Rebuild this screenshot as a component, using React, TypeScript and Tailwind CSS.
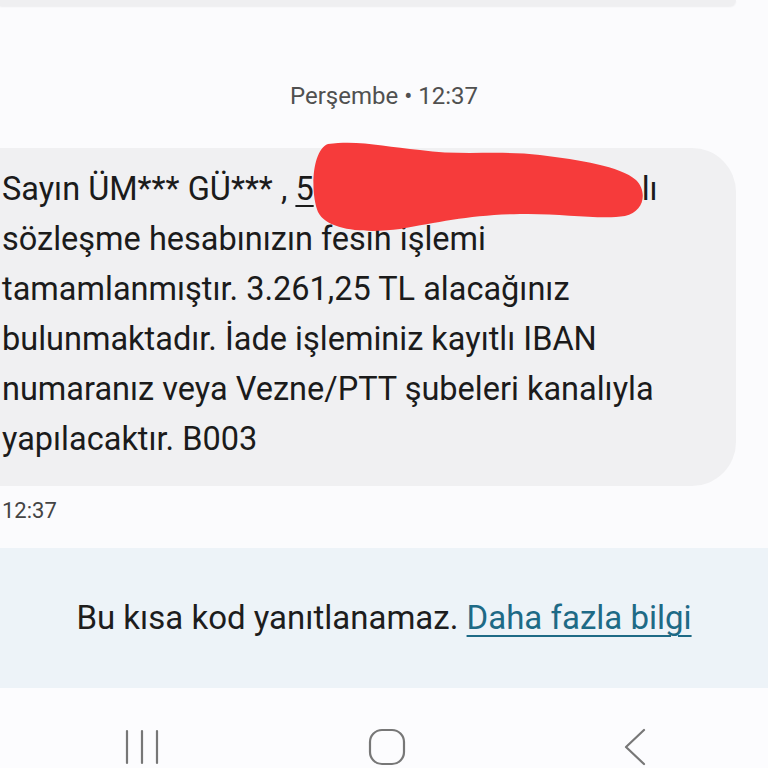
export default function App() {
  const font = { fontFamily: 'Roboto, "Noto Sans", Arial, sans-serif' };
  return (
    <div className="flex h-[768px] w-[768px] flex-col overflow-hidden bg-[#fbfbfd]" style={font}>
      {/* previous bubble remnant */}
      <div className="h-[6px] w-[736px] rounded-br-[16px] bg-[#efeff1] shadow-[0_1px_2px_rgba(0,0,0,0.06)]" />

      {/* date header */}
      <div className="mt-[76px] text-center text-[24px] leading-[28px] text-[#505050]">
        Perşembe • 12:37
      </div>

      {/* message bubble */}
      <div className="relative mt-[38px] w-[736px] rounded-r-[44px] bg-[#f0f0f2] pb-[22px] pl-[2px] pt-[16px] text-[32.5px] leading-[50px] text-[#1b1b1b]">
        <div className="whitespace-nowrap">
          Sayın ÜM*** GÜ*** , <span className="underline decoration-[2px] underline-offset-[5px]">5</span>
          <span className="inline-block w-[328px]" />lı
        </div>
        <div className="whitespace-nowrap">sözleşme hesabınızın fesih işlemi</div>
        <div className="whitespace-nowrap">tamamlanmıştır. 3.261,25 TL alacağınız</div>
        <div className="whitespace-nowrap">bulunmaktadır. İade işleminiz kayıtlı IBAN</div>
        <div className="whitespace-nowrap">numaranız veya Vezne/PTT şubeleri kanalıyla</div>
        <div className="whitespace-nowrap">yapılacaktır. B003</div>

        {/* redaction scribble */}
        <svg
          className="absolute left-[305px] top-[-10px]"
          width="345"
          height="100"
          viewBox="305 138 345 100"
        >
          <path
            d="M328 144 C360 140 385 147 420 150 C460 156 500 150 540 155 C580 160 620 166 636 180 C648 192 644 212 625 216 C600 220 560 213 520 214 C470 215 440 222 400 229 C370 233 328 232 318 212 C310 192 312 150 328 144 Z"
            fill="#f63b3b"
          />
        </svg>
      </div>

      <div className="mt-[12px] pl-[2px] text-[22px] leading-[26px] text-[#444]">12:37</div>

      {/* info band */}
      <div className="mt-[24px] flex h-[140px] items-center justify-center bg-[#edf3f8] text-[33px] text-[#1d1d1d]">
        <span>
          Bu kısa kod yanıtlanamaz.{' '}
          <span className="text-[#1e6a86] underline decoration-[2px] underline-offset-[6px]">Daha fazla bilgi</span>
        </span>
      </div>

      {/* nav bar */}
      <div className="flex flex-1 items-start bg-[#fcfcfe] pt-[39px]">
        <svg className="ml-[122px]" width="40" height="40" viewBox="0 0 40 40">
          <g stroke="#777" strokeWidth="2.2" strokeLinecap="round">
            <line x1="5" y1="4" x2="5" y2="36" />
            <line x1="20" y1="4" x2="20" y2="36" />
            <line x1="35" y1="4" x2="35" y2="36" />
          </g>
        </svg>
        <svg className="ml-[205px]" width="40" height="40" viewBox="0 0 40 40">
          <rect x="3" y="3" width="34" height="34" rx="12" fill="none" stroke="#777" strokeWidth="2.2" />
        </svg>
        <svg className="ml-[208px]" width="40" height="40" viewBox="0 0 40 40">
          <polyline points="29,3 11,20 29,37" fill="none" stroke="#777" strokeWidth="2.2" strokeLinecap="round" strokeLinejoin="round" />
        </svg>
      </div>
    </div>
  );
}
